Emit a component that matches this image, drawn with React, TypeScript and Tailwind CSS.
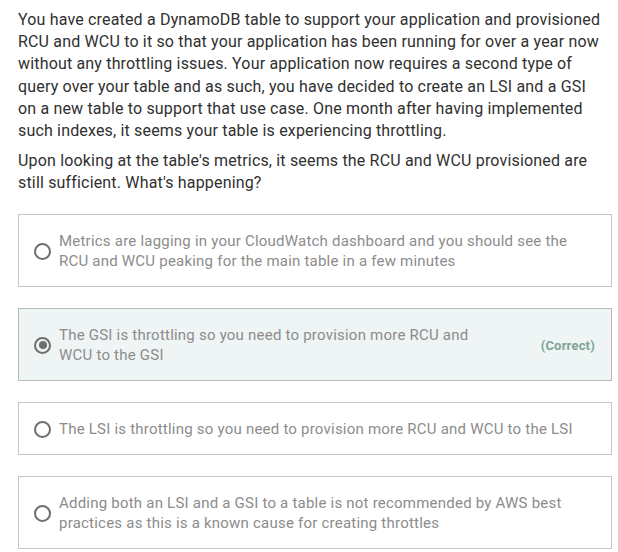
import React from "react";

const options = [
  {
    text: "Metrics are lagging in your CloudWatch dashboard and you should see the RCU and WCU peaking for the main table in a few minutes",
    selected: false,
    correct: false,
  },
  {
    text: "The GSI is throttling so you need to provision more RCU and WCU to the GSI",
    selected: true,
    correct: true,
  },
  {
    text: "The LSI is throttling so you need to provision more RCU and WCU to the LSI",
    selected: false,
    correct: false,
  },
  {
    text: "Adding both an LSI and a GSI to a table is not recommended by AWS best practices as this is a known cause for creating throttles",
    selected: false,
    correct: false,
  },
];

function Radio({ selected }: { selected: boolean }) {
  return (
    <div className="w-[17px] h-[17px] shrink-0 rounded-full border-2 border-[#6f6f6f] flex items-center justify-center">
      {selected && <div className="w-[8px] h-[8px] rounded-full bg-[#6f6f6f]" />}
    </div>
  );
}

export default function App() {
  return (
    <div
      className="w-[618px] h-[552px] bg-white pl-[18px] pr-[6px] pt-[9px] overflow-hidden"
      style={{ fontFamily: "Roboto, 'Liberation Sans', sans-serif" }}
    >
      <div className="w-[584px] text-[16px] leading-[22.2px] tracking-[0.17px] text-[#303030]">
        <p>
          You have created a DynamoDB table to support your application and provisioned RCU and WCU to it so that your application has been running for over a year now without any throttling issues. Your application now requires a second type of query over your table and as such, you have decided to create an LSI and a GSI on a new table to support that use case. One month after having implemented such indexes, it seems your table is experiencing throttling.
        </p>
        <p className="mt-[8px]">
          Upon looking at the table's metrics, it seems the RCU and WCU provisioned are still sufficient. What's happening?
        </p>
      </div>
      <div className="mt-[19px] flex flex-col gap-[21px] w-[594px]">
        {options.map((o, i) => (
          <div
            key={i}
            className={
              "flex items-center border pt-[16px] pb-[14px] pl-[15px] pr-[16px] " +
              (o.selected ? "bg-[#eff4f4] border-[#b5b9b9]" : "bg-white border-[#c6c6c6]")
            }
          >
            <Radio selected={o.selected} />
            <div
              className={
                "ml-[8px] flex-1 text-[15px] leading-[20.6px] tracking-[0.22px] text-[#8c8c8c] " +
                (o.correct ? "pr-[40px]" : "")
              }
            >
              {o.text}
            </div>
            {o.correct && (
              <div className="text-[13px] font-bold tracking-[0.2px] text-[#7ea596] whitespace-nowrap">(Correct)</div>
            )}
          </div>
        ))}
      </div>
    </div>
  );
}
